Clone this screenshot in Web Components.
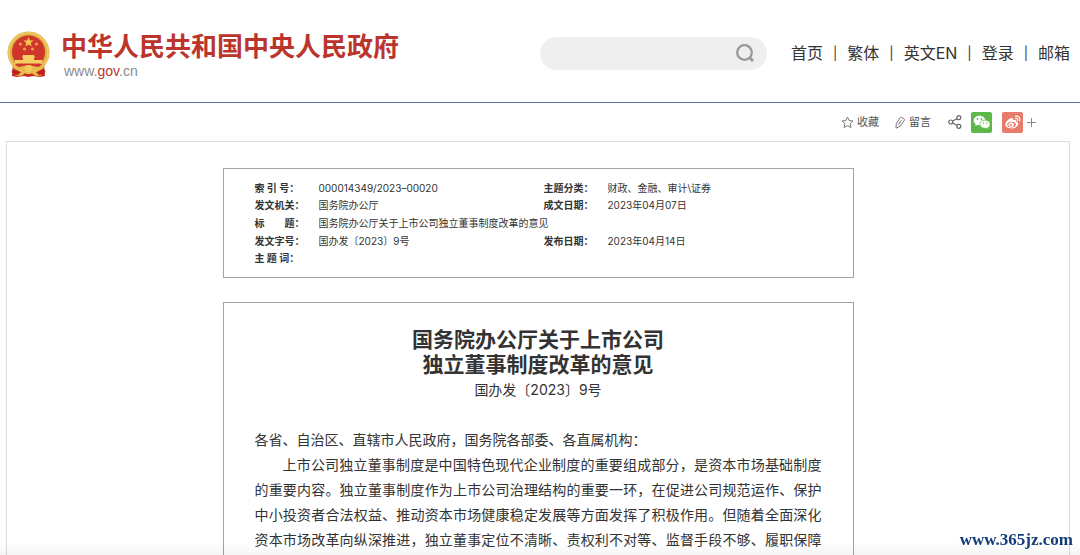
<!DOCTYPE html>
<html lang="zh-CN">
<head>
<meta charset="utf-8">
<meta name="viewport" content="width=device-width, initial-scale=1">
<title>国务院办公厅关于上市公司独立董事制度改革的意见</title>
<style>
  html { scrollbar-width: none; }
  body {
    margin: 0;
    background: #fff;
    color: #333;
    font-family: Inter, "Noto Sans CJK SC", sans-serif;
    font-size: 14px;
  }
</style>
</head>
<body>
<gov-header></gov-header>
<main>
  <share-bar></share-bar>
  <content-frame>
    <doc-meta></doc-meta>
    <doc-article number="国办发〔2023〕9号">
      <span slot="title">国务院办公厅关于上市公司<br>独立董事制度改革的意见</span>
      <doc-para plain>各省、自治区、直辖市人民政府，国务院各部委、各直属机构：</doc-para>
      <doc-para>上市公司独立董事制度是中国特色现代企业制度的重要组成部分，是资本市场基础制度的重要内容。独立董事制度作为上市公司治理结构的重要一环，在促进公司规范运作、保护中小投资者合法权益、推动资本市场健康稳定发展等方面发挥了积极作用。但随着全面深化资本市场改革向纵深推进，独立董事定位不清晰、责权利不对等、监督手段不够、履职保障</doc-para>
    </doc-article>
  </content-frame>
</main>
<site-mark>www.365jz.com</site-mark>

<script>
class Base extends HTMLElement {
  connectedCallback() {
    if (this.shadowRoot) return;
    this.attachShadow({ mode: "open" }).innerHTML = this.render();
  }
}

customElements.define("gov-emblem", class extends Base {
  render() {
    return `
<style>:host{display:block;width:43px;height:48px;flex:none} svg{display:block}</style>
<svg width="43" height="48" viewBox="0 0 43 48" aria-hidden="true">
  <path d="M6 33 5 45l5 1 7-1 4.500 1 4.500-1 7 1 5-1-1-12z" fill="#c8281f"/>
  <circle cx="21.500" cy="21.500" r="21" fill="#dcae44"/>
  <circle cx="21.500" cy="21.500" r="19.500" fill="none" stroke="#efca62" stroke-width="2"/>
  <circle cx="21.500" cy="21" r="16.500" fill="#cf352b"/>
  <path fill="#f3c74e" d="M21.500 6l1.400 3.400 3.600.2-2.800 2.300.9 3.600-3.100-2-3.100 2 .9-3.600-2.800-2.300 3.600-.2z"/>
  <g fill="#e6a53d"><circle cx="13.500" cy="13" r="1.600"/><circle cx="29.500" cy="13" r="1.600"/><circle cx="17.500" cy="18" r="1.600"/><circle cx="25.500" cy="18" r="1.600"/></g>
  <path fill="#f5cf62" d="M16 24h11l1 3h-1v2h8v3.500H8V29h8v-2h-1z"/>
  <path fill="#cf352b" d="M8 33h27l-4 4H12z"/>
  <path fill="#e9b94a" d="M6 32c3 5 8 4 11 3 2-1.500 7-1.500 9 0 3 1 8 2 11-3l1 3c-3 5-7 5-10 4 0 3 4 4 7 5-4 2-8 1-10-2-2 1.500-5 1.500-7 0-2 3-6 4-10 2 3-1 7-2 7-5-3 1-7 1-10-4z"/>
  <circle cx="21.500" cy="38" r="3.500" fill="#f1cb5b"/>
  <path d="M5 40l7 3M38 40l-7 3" stroke="#b8231c" stroke-width="2.500"/>
</svg>`;
  }
});

customElements.define("search-box", class extends Base {
  render() {
    return `
<style>
  :host{display:block;width:227px;flex:none}
  form{display:flex;align-items:center;height:33px;border-radius:17px;background:#efefef;padding:0 12px 0 16px;margin:0}
  input{flex:1;min-width:0;border:0;background:none;outline:0;font:inherit;color:inherit;padding:0}
  button{display:flex;border:0;background:none;padding:0}
</style>
<form role="search">
  <input type="search" aria-label="搜索">
  <button type="button" aria-label="搜索"><svg width="20" height="20" viewBox="0 0 20 20" fill="none" stroke="#999" stroke-width="2.300"><circle cx="9.500" cy="9.500" r="7.300"/><path d="M14.500 14.500l3.500 3.500" stroke-width="3"/></svg></button>
</form>`;
  }
});

customElements.define("gov-header", class extends Base {
  render() {
    const links = ["首页", "繁体", "英文EN", "登录", "邮箱"];
    return `
<style>
  :host{display:block;border-bottom:1px solid #5a75a5}
  header{display:flex;align-items:center;min-height:98px;padding:4px 10px 0 7px}
  .brand{display:flex;align-items:center;gap:11px;padding-top:4px;color:#bb352d;text-decoration:none}
  .name{font-size:26px;line-height:32px;font-weight:700;white-space:nowrap}
  .url{font:14px/16px "Liberation Sans",Arial,sans-serif;color:#8c8c8c;padding-left:3px}
  .url b{font-weight:400;color:#bb352d}
  search-box{margin-left:auto}
  nav{display:flex;gap:10px;margin-left:24px;font-size:16px;line-height:24px;white-space:nowrap}
  nav a{color:#333;text-decoration:none}
  nav span{font-size:13px}
</style>
<header>
  <a class="brand" href="#"><gov-emblem></gov-emblem><div><div class="name">中华人民共和国中央人民政府</div><div class="url">www.<b>gov</b>.cn</div></div></a>
  <search-box></search-box>
  <nav>${links.map(t => `<a href="#">${t}</a>`).join("<span>|</span>")}</nav>
</header>`;
  }
});

customElements.define("share-bar", class extends Base {
  render() {
    return `
<style>
  :host{display:block}
  div{display:flex;align-items:center;justify-content:flex-end;height:38px;padding-right:44px;font-size:11px;line-height:16px}
  a,button{display:flex;align-items:center;gap:3px;color:#555;text-decoration:none;border:0;background:none;padding:0;font:inherit}
  a+a{margin-left:15px}
  a+button{margin-left:17px}
  button+button{margin-left:9px}
  button.wb{margin-left:10px}
  button.more{margin-left:3px}
  svg{display:block}
</style>
<div>
  <a href="#"><svg width="13" height="13" viewBox="0 0 13 13" fill="none" stroke="#777" stroke-linejoin="round"><path d="M6.500 1l1.600 3.500 3.900.5-2.800 2.600.7 3.900-3.400-1.900-3.400 1.900.7-3.900L1 5l3.900-.5z"/></svg>收藏</a>
  <a href="#"><svg width="12" height="13" viewBox="0 0 12 13" fill="none" stroke="#777" stroke-linejoin="round"><path d="M7.300 1.300l3 1.800q.5.400.2.900L6.200 10.200 2 12.200l.2-4.400 4-6.200q.4-.6 1.100-.3zM7.300 4.200L4.500 8.800"/></svg>留言</a>
  <button type="button" aria-label="分享"><svg width="14" height="14" viewBox="0 0 14 14" fill="none" stroke="#666" stroke-width="1.200"><circle cx="2.700" cy="7" r="2"/><circle cx="10.800" cy="2.700" r="2"/><circle cx="10.800" cy="11.300" r="2"/><path d="M4.600 6l4.300-2.300M4.600 8l4.300 2.300"/></svg></button>
  <button type="button" aria-label="微信"><svg width="21" height="21" viewBox="0 0 21 21"><rect width="21" height="21" rx="2" fill="#5db849"/><path fill="#fff" d="M8.500 3.700c-3.300 0-5.900 2.100-5.900 4.800 0 1.500.9 2.900 2.200 3.700l-.6 1.900 2.200-1.100 2.100.3c4 0 6-2.300 6-4.800s-2.700-4.800-6-4.800z"/><path fill="#fff" stroke="#5db849" stroke-width=".8" d="M14 8c-2.900 0-5.100 1.900-5.100 4.200s2.200 4.200 5.100 4.200l1.700-.2 2 1-.5-1.700c1.200-.8 2-1.900 2-3.300C19.200 9.900 16.800 8 14 8z"/><g fill="#5db849"><circle cx="6.500" cy="7" r=".9"/><circle cx="10.500" cy="7" r=".9"/><circle cx="12.400" cy="11" r=".7"/><circle cx="15.700" cy="11" r=".7"/></g></svg></button>
  <button class="wb" type="button" aria-label="微博"><svg width="22" height="21" viewBox="0 0 22 21"><rect width="21" height="21" rx="2" fill="#e77b6c"/><path fill="#fff" d="M8.800 6.300c1.400-.6 2.500 0 2.100 1.800 1.900-.7 3.900-.4 3.400 1.700 1.300.4 2.100 1.200 1.900 2.500-.3 2.300-3.200 4.200-6.700 4.200S3.300 15 3.300 12.600c0-2.200 3-5.400 5.500-6.300z"/><ellipse cx="9.500" cy="12.600" rx="4.300" ry="2.900" fill="#e77b6c"/><ellipse cx="9.200" cy="12.800" rx="2.700" ry="2.200" fill="#fff"/><circle cx="8.700" cy="13.200" r="1" fill="#e77b6c"/><path d="M13.500 4.300c3-.6 5 1.800 4.100 4.600M13.700 6.500c1.400-.3 2.300.7 1.900 2" fill="none" stroke="#fff" stroke-width="1.200" stroke-linecap="round"/></svg></button>
  <button class="more" type="button" aria-label="更多"><svg width="9" height="9" viewBox="0 0 9 9" stroke="#888"><path d="M4.500 0v9M0 4.500h9"/></svg></button>
</div>`;
  }
});

customElements.define("content-frame", class extends Base {
  render() {
    return `
<style>
  :host{display:flex;flex-direction:column;align-items:center;gap:24px;margin:0 10px 0 6px;padding:26px 16px;border:1px solid #ddd}
  ::slotted(*){width:100%;max-width:631px;box-sizing:border-box;border:1px solid #a3a3a3}
</style><slot></slot>`;
  }
});

customElements.define("doc-meta", class extends Base {
  render() {
    return `
<style>
  :host{display:block;padding:10px 31px}
  table{border-collapse:collapse;table-layout:fixed;width:100%;height:88px;font-size:10px;line-height:16px}
  th,td{padding:0;text-align:left;vertical-align:middle;white-space:nowrap}
  .k{width:64px}.v{width:225px}
</style>
<table>
  <colgroup><col class="k"><col class="v"><col class="k"><col></colgroup>
  <tr><th>索&nbsp;引&nbsp;号：</th><td>000014349/2023–00020</td><th>主题分类：</th><td>财政、金融、审计\\证券</td></tr>
  <tr><th>发文机关：</th><td>国务院办公厅</td><th>成文日期：</th><td>2023年04月07日</td></tr>
  <tr><th>标　　题：</th><td colspan="3">国务院办公厅关于上市公司独立董事制度改革的意见</td></tr>
  <tr><th>发文字号：</th><td>国办发〔2023〕9号</td><th>发布日期：</th><td>2023年04月14日</td></tr>
  <tr><th>主&nbsp;题&nbsp;词：</th><td colspan="3"></td></tr>
</table>`;
  }
});

customElements.define("doc-article", class extends Base {
  render() {
    return `
<style>
  :host{display:block;padding:24px 31px;line-height:25px}
  h1{margin:0;font-size:21px;line-height:25px;font-weight:700;text-align:center}
  p{margin:0 0 25px;text-align:center}
</style>
<h1><slot name="title"></slot></h1>
<p>${this.getAttribute("number")}</p>
<slot></slot>`;
  }
});

customElements.define("doc-para", class extends Base {
  render() {
    return `
<style>
  :host{display:block;text-indent:2em;text-align:justify;text-align-last:justify}
  :host([plain]){text-indent:0;text-align-last:left}
</style><slot></slot>`;
  }
});

customElements.define("site-mark", class extends Base {
  render() {
    return `
<style>
  :host{position:fixed;left:0;right:0;bottom:0;padding:0 7px 5px;text-align:right;pointer-events:none;
    font:700 17px/20px "Liberation Serif",serif;color:#123d7a;
    background:linear-gradient(transparent 50%,rgba(0,0,0,.04))}
</style><slot></slot>`;
  }
});
</script>
</body>
</html>
